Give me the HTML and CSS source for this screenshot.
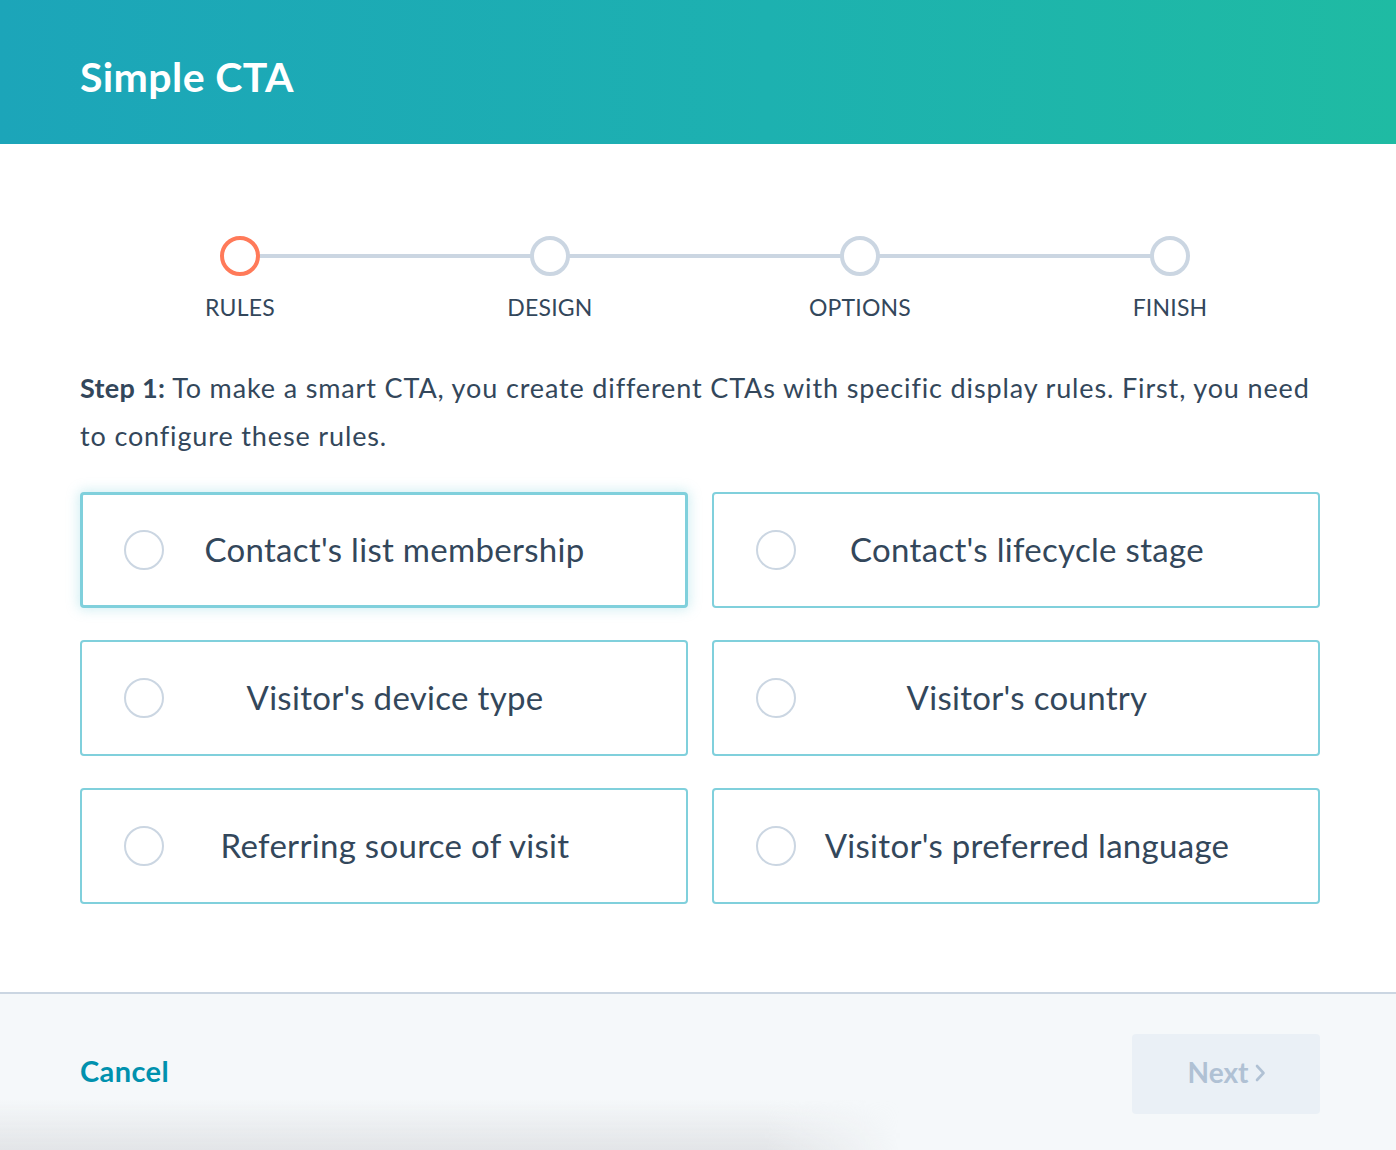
FILE: index.html
```html
<!DOCTYPE html>
<html lang="en">
<head>
<meta charset="utf-8">
<title>Simple CTA</title>
<link rel="stylesheet" href="styles.css">
</head>
<body>
<div class="modal">
  <header class="modal-header">
    <h1 class="modal-title">Simple CTA</h1>
  </header>
  <main class="modal-body">
    <ol class="stepper">
      <li class="step step-active"><span class="step-dot"></span><span class="step-label">RULES</span></li>
      <li class="step"><span class="step-dot"></span><span class="step-label">DESIGN</span></li>
      <li class="step"><span class="step-dot"></span><span class="step-label">OPTIONS</span></li>
      <li class="step step-last"><span class="step-dot"></span><span class="step-label">FINISH</span></li>
    </ol>
    <p class="intro"><strong>Step 1:</strong> To make a smart CTA, you create different CTAs with specific display rules. First, you need to configure these rules.</p>
    <div class="options">
      <label class="option option-focus"><span class="radio"></span><span class="option-text">Contact's list membership</span></label>
      <label class="option"><span class="radio"></span><span class="option-text">Contact's lifecycle stage</span></label>
      <label class="option"><span class="radio"></span><span class="option-text">Visitor's device type</span></label>
      <label class="option"><span class="radio"></span><span class="option-text">Visitor's country</span></label>
      <label class="option"><span class="radio"></span><span class="option-text">Referring source of visit</span></label>
      <label class="option"><span class="radio"></span><span class="option-text">Visitor's preferred language</span></label>
    </div>
  </main>
  <footer class="modal-footer">
    <a class="cancel" href="#">Cancel</a>
    <button class="next" type="button">Next <svg class="chev" width="12" height="20" viewBox="0 0 12 20"><path d="M3 3 L9.5 10 L3 17" fill="none" stroke="currentColor" stroke-width="2.6" stroke-linecap="round" stroke-linejoin="round"/></svg></button>
  </footer>
</div>
</body>
</html>
```
FILE: styles.css
```css
* { box-sizing: border-box; }
html, body { margin: 0; padding: 0; background: #ffffff; }
body {
  font-family: Lato, "Noto Sans", "Liberation Sans", sans-serif;
  color: #33475b;
  width: 1396px;
  height: 1150px;
  overflow: hidden;
}
.modal { display: flex; flex-direction: column; height: 1150px; }

.modal-header {
  height: 144px;
  flex: none;
  display: flex;
  align-items: center;
  padding: 8px 80px 0;
  background: linear-gradient(90deg, #1ca5b9 0%, #1db1b0 55%, #1fbba3 100%);
}
.modal-title {
  margin: 0;
  color: #ffffff;
  font-size: 41px;
  font-weight: 700;
  letter-spacing: 0.4px;
}

.modal-body { flex: 1; padding: 92px 76px 0 80px; }

.stepper {
  list-style: none;
  margin: 0 0 0 5px;
  padding: 0;
  display: grid;
  grid-template-columns: repeat(4, 310px);
}
.step {
  position: relative;
  display: flex;
  flex-direction: column;
  align-items: center;
}
.step::after {
  content: "";
  position: absolute;
  top: 18px;
  left: 50%;
  width: 100%;
  height: 4px;
  background: #cbd6e2;
}
.step-last::after { display: none; }
.step-dot {
  position: relative;
  z-index: 1;
  width: 40px;
  height: 40px;
  border: 4px solid #cbd6e2;
  border-radius: 50%;
  background: #ffffff;
}
.step-active .step-dot { border-color: #ff7a59; }
.step-label {
  margin-top: 17px;
  font-size: 23px;
  line-height: 28px;
  letter-spacing: 0.2px;
  color: #33475b;
}

.intro {
  margin: 43px 0 0;
  font-size: 27px;
  line-height: 48px;
  letter-spacing: 0.86px;
  color: #33475b;
}
.intro strong { font-weight: 700; letter-spacing: 0.3px; }

.options {
  margin-top: 32px;
  display: grid;
  grid-template-columns: 608px 608px;
  column-gap: 24px;
  row-gap: 32px;
}
.option {
  height: 116px;
  display: flex;
  align-items: center;
  padding: 0 60px 3px 42px;
  border: 2px solid #80d0dc;
  border-radius: 4px;
  background: #ffffff;
}
.option .radio { margin-top: 3px; }
.option-focus {
  border-width: 3px;
  padding-left: 41px;
  box-shadow: 0 0 12px 2px rgba(128, 208, 220, 0.35);
}
.radio {
  flex: none;
  width: 40px;
  height: 40px;
  border: 2.5px solid #cbd6e2;
  border-radius: 50%;
}
.option-text {
  flex: 1;
  text-align: center;
  font-size: 33px;
  letter-spacing: 0.3px;
  color: #33475b;
}

.modal-footer {
  position: relative;
  flex: none;
  height: 158px;
  border-top: 2px solid #cbd6e2;
  background: #f5f8fa;
  display: flex;
  align-items: center;
  justify-content: space-between;
  padding: 4px 76px 0 80px;
}
.modal-footer::after {
  content: "";
  position: absolute;
  left: 0;
  bottom: 0;
  width: 900px;
  height: 50px;
  background: linear-gradient(180deg, rgba(220,222,225,0) 0%, rgba(220,222,225,0.75) 100%);
  -webkit-mask-image: linear-gradient(90deg, #000 0%, #000 85%, transparent 100%);
  mask-image: linear-gradient(90deg, #000 0%, #000 85%, transparent 100%);
  pointer-events: none;
}
.cancel {
  color: #0091ae;
  font-size: 29px;
  font-weight: 700;
  letter-spacing: 0.4px;
  text-decoration: none;
  margin-top: -8px;
}
.next {
  width: 188px;
  height: 80px;
  border: none;
  border-radius: 4px;
  background: #eaf0f6;
  color: #b0c1d4;
  font-family: inherit;
  font-size: 28px;
  font-weight: 700;
  display: flex;
  align-items: center;
  justify-content: center;
  gap: 6px;
  padding: 0 0 4px 2px;
}
.chev { display: block; margin-top: 2px; }
```
